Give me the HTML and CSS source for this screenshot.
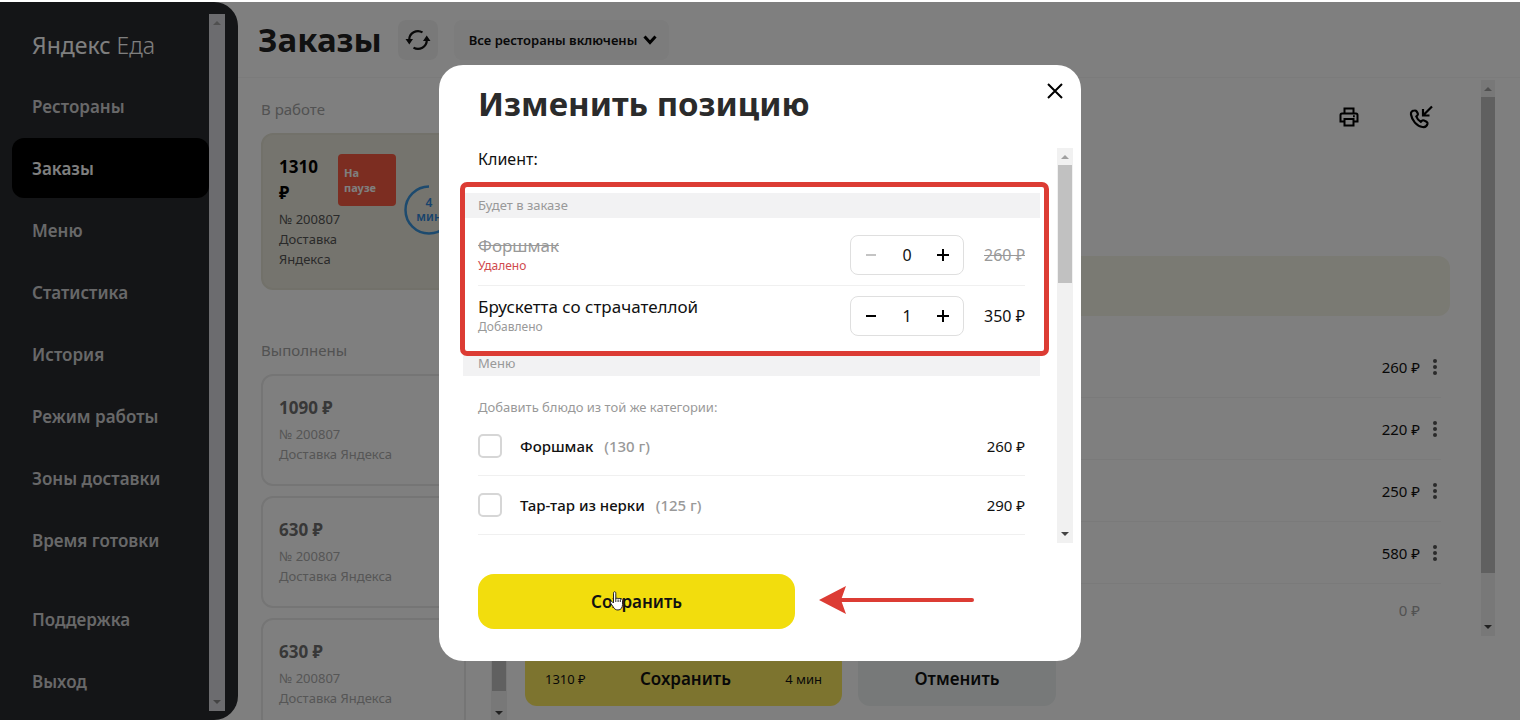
FILE: index.html
```html
<!DOCTYPE html>
<html lang="ru">

<head>
    <meta charset="UTF-8">
    <meta name="viewport" content="width=device-width, initial-scale=1.0">
    <title>Яндекс Еда — Заказы</title>
    <link rel="stylesheet" href="styles.css">
</head>

<body>
    <div class="app">
        <aside class="sidebar">
            <div class="sidebar-content">
                <div class="logo"><b>Яндекс</b> Еда</div>
                <nav class="menu">
                    <a href="#">Рестораны</a>
                    <a href="#" class="active">Заказы</a>
                    <a href="#">Меню</a>
                    <a href="#">Статистика</a>
                    <a href="#">История</a>
                    <a href="#">Режим работы</a>
                    <a href="#">Зоны доставки</a>
                    <a href="#">Время готовки</a>
                </nav>
                <nav class="menu menu-bottom">
                    <a href="#">Поддержка</a>
                    <a href="#">Выход</a>
                </nav>
            </div>
            <div class="scrollbar sidebar-scrollbar" aria-hidden="true">
                <i class="arrow-up"></i>
                <i class="arrow-down"></i>
            </div>
        </aside>

        <main class="main">
            <header class="header">
                <h1>Заказы</h1>
                <button class="refresh" type="button" aria-label="Обновить">
                    <svg width="26" height="24" viewBox="0 0 26 24" fill="none" stroke="#111" stroke-width="2.2">
                        <path d="M4.200 12A8.800 8.800 0 0 1 17.500 4.400M21.800 12A8.800 8.800 0 0 1 8.500 19.600" />
                        <path d="M.500 11h7.500l-3.700 5.500zM25.500 13H18l3.700-5.500z" fill="#111" stroke="none" />
                    </svg>
                </button>
                <div class="select-box">
                    <select aria-label="Рестораны">
                        <option>Все рестораны включены</option>
                    </select>
                    <svg width="14" height="10" viewBox="0 0 14 10" fill="none" stroke="#000" stroke-width="3">
                        <path d="M1.500 1.500L7 7.500l5.500-6" />
                    </svg>
                </div>
            </header>

            <div class="content">
                <section class="orders">
                    <h2>В работе</h2>
                    <article class="order order-current">
                        <div>
                            <div class="order-top">
                                <strong>1310 ₽</strong>
                                <span class="badge">На паузе</span>
                            </div>
                            <p class="order-info">№ 200807<br>Доставка Яндекса</p>
                        </div>
                        <div class="timer">
                            <svg width="50" height="50" viewBox="0 0 50 50" fill="none" stroke="#3a94dc" stroke-width="2.500">
                                <path d="M25 1.500a23.500 23.500 0 1 0 23.500 23.500" />
                            </svg>
                            <span>4<br>мин</span>
                        </div>
                    </article>
                    <h2 class="done-title">Выполнены</h2>
                    <article class="order">
                        <strong>1090 ₽</strong>
                        <p class="order-info">№ 200807<br>Доставка Яндекса</p>
                    </article>
                    <article class="order">
                        <strong>630 ₽</strong>
                        <p class="order-info">№ 200807<br>Доставка Яндекса</p>
                    </article>
                    <article class="order">
                        <strong>630 ₽</strong>
                        <p class="order-info">№ 200807<br>Доставка Яндекса</p>
                    </article>
                </section>
                <div class="scrollbar orders-scrollbar" aria-hidden="true">
                    <i class="arrow-up"></i>
                    <span class="thumb"></span>
                    <i class="arrow-down"></i>
                </div>

                <section class="details">
                    <div class="details-body">
                        <div class="details-content">
                            <div class="tools">
                                <button type="button" aria-label="Печать">
                                    <svg width="20" height="20" viewBox="0 0 20 20" fill="none" stroke="#000" stroke-width="2">
                                        <path d="M5.500 6V1.500h9V6M5 14.500H1.500V8q0-1.500 1.500-1.500h14q1.500 0 1.500 1.500v6.500H15M5.500 12h9v6.500h-9z" />
                                        <path d="M14 9.300h1.800" />
                                    </svg>
                                </button>
                                <button type="button" aria-label="Позвонить">
                                    <svg width="24" height="24" viewBox="0 0 24 24" fill="none" stroke="#000" stroke-width="2.200">
                                        <path d="M5.500 5.500C3.500 5.500 1.500 7 2 9.500c1 6 5.500 11.500 11.500 12.500 2.500.4 4.500-1 5-3.200.2-1-.2-1.500-1-2l-2.600-1.400c-1-.4-1.500-.2-2.300.6l-.8.8C9.500 15.500 8 13.500 7.300 11.500l1-1c.6-.6.8-1.200.5-2L7.600 6.400c-.4-.7-1-1-2.100-.9z" />
                                        <path d="M23 1.500L14.500 10M14 4v6.500h6.500" />
                                    </svg>
                                </button>
                            </div>
                            <div class="notice"></div>
                            <ul class="positions">
                                <li>260 ₽ <button type="button" aria-label="Действия"><i></i><i></i><i></i></button></li>
                                <li>220 ₽ <button type="button" aria-label="Действия"><i></i><i></i><i></i></button></li>
                                <li>250 ₽ <button type="button" aria-label="Действия"><i></i><i></i><i></i></button></li>
                                <li>580 ₽ <button type="button" aria-label="Действия"><i></i><i></i><i></i></button></li>
                                <li class="zero">0 ₽</li>
                            </ul>
                        </div>
                        <div class="scrollbar details-scrollbar" aria-hidden="true">
                            <i class="arrow-up"></i>
                            <span class="thumb"></span>
                            <i class="arrow-down"></i>
                        </div>
                    </div>
                    <footer class="details-footer">
                        <button class="accept" type="button"><span>1310 ₽</span><b>Сохранить</b><span>4 мин</span></button>
                        <button class="cancel" type="button">Отменить</button>
                    </footer>
                </section>
            </div>
        </main>
    </div>

    <div class="overlay">
        <div class="modal" role="dialog" aria-modal="true" aria-labelledby="modalTitle">
            <div class="modal-header">
                <h2 id="modalTitle">Изменить позицию</h2>
                <button type="button" aria-label="Закрыть">
                    <svg width="16" height="16" viewBox="0 0 16 16" stroke="#000" stroke-width="2">
                        <path d="M1 1l14 14M15 1L1 15" />
                    </svg>
                </button>
            </div>
            <div class="modal-body">
                <div class="modal-content">
                    <p class="client">Клиент:</p>
                    <section class="in-order">
                        <h3>Будет в заказе</h3>
                        <div class="item">
                            <div class="item-name">
                                <s>Форшмак</s>
                                <small class="removed">Удалено</small>
                            </div>
                            <div class="stepper">
                                <button type="button" aria-label="Меньше" disabled><svg width="12" height="12" viewBox="0 0 12 12"><path d="M1 6h10" /></svg></button>
                                <output>0</output>
                                <button type="button" aria-label="Больше"><svg width="12" height="12" viewBox="0 0 12 12"><path d="M0 6h12M6 0v12" /></svg></button>
                            </div>
                            <s class="price">260 ₽</s>
                        </div>
                        <div class="item">
                            <div class="item-name">
                                <span>Брускетта со страчателлой</span>
                                <small>Добавлено</small>
                            </div>
                            <div class="stepper">
                                <button type="button" aria-label="Меньше"><svg width="12" height="12" viewBox="0 0 12 12"><path d="M1 6h10" /></svg></button>
                                <output>1</output>
                                <button type="button" aria-label="Больше"><svg width="12" height="12" viewBox="0 0 12 12"><path d="M0 6h12M6 0v12" /></svg></button>
                            </div>
                            <span class="price">350 ₽</span>
                        </div>
                        <div class="highlight"></div>
                    </section>
                    <section>
                        <h3>Меню</h3>
                        <p class="hint">Добавить блюдо из той же категории:</p>
                        <label class="dish">
                            <input type="checkbox">
                            <span>Форшмак</span>
                            <span class="weight">(130 г)</span>
                            <span class="dish-price">260 ₽</span>
                        </label>
                        <label class="dish">
                            <input type="checkbox">
                            <span>Тар-тар из нерки</span>
                            <span class="weight">(125 г)</span>
                            <span class="dish-price">290 ₽</span>
                        </label>
                    </section>
                </div>
                <div class="scrollbar modal-scrollbar" aria-hidden="true">
                    <i class="arrow-up"></i>
                    <span class="thumb"></span>
                    <i class="arrow-down"></i>
                </div>
            </div>
            <div class="modal-footer">
                <button class="save" type="button">
                    Сохранить
                    <svg class="cursor" width="16" height="20" viewBox="0 0 16 20" fill="#fff" stroke="#222" stroke-width="1">
                        <path d="M4.500 12V2.200c0-2 2.300-2 2.300 0V8c.3-1.300 2-1.200 2.300 0 .4-1 2-.8 2.200.4.500-.9 2.200-.5 2.200.9v4.200c0 3-1.500 5.500-4.500 5.500-2.500 0-3.700-1.200-4.700-3L1.500 12c-.7-1.400.8-2.300 1.800-1.200z" />
                        <path d="M6.800 8v3M9.100 8.500V11M11.300 9v2" />
                    </svg>
                </button>
                <svg class="pointer" width="155" height="28" viewBox="0 0 155 28">
                    <path d="M0 14L27 0l-5 14 5 14z" fill="#dc3c34" />
                    <path d="M20 14h133" stroke="#dc3c34" stroke-width="4" stroke-linecap="round" />
                </svg>
            </div>
        </div>
    </div>
</body>

</html>
```
FILE: styles.css
```css
:root {
    --text-color: #111;
    --muted-color: #999;
    --line-color: #f0f0f0;
    --red-color: #dc3c34;
    --yellow-color: #f2dd0d;
}

* {
    box-sizing: border-box;
    margin: 0;
    padding: 0;
}

body {
    font-family: 'Noto Sans', 'Open Sans', sans-serif;
    font-size: 16px;
    color: var(--text-color);
    background: #fff;
    overflow: hidden;
}

button,
select {
    font: inherit;
    color: inherit;
    border: 0;
    background: none;
    cursor: pointer;
}

ul {
    list-style: none;
}

.app {
    display: flex;
    height: 100vh;
    padding-top: 2px;
}

/* scrollbars */
.scrollbar {
    display: flex;
    flex-direction: column;
    align-items: center;
    flex: none;
    width: 16px;
    padding: 7px 1px;
    background: #f1f1f1;
}

.arrow-up,
.arrow-down {
    border: 4px solid transparent;
    border-top-width: 0;
    border-bottom: 4px solid #a0a0a0;
}

.arrow-down {
    margin-top: auto;
    border-bottom-width: 0;
    border-top: 4px solid #444;
}

.thumb {
    width: 100%;
    margin-top: 6px;
    background: #c1c1c1;
}

/* sidebar */
.sidebar {
    display: flex;
    flex: none;
    width: 238px;
    padding: 12px 13px 9px 12px;
    background: #282a2e;
    border-radius: 0 24px 24px 0;
}

.sidebar-content {
    flex: 1;
    overflow: hidden;
}

.sidebar-scrollbar {
    background: #d8d8de;
}

.sidebar-scrollbar .arrow-down {
    border-top-color: #888;
}

.logo {
    height: 62px;
    padding-left: 20px;
    font-size: 23px;
    font-weight: 300;
    line-height: 62px;
    color: #fff;
}

.logo b {
    font-weight: 400;
}

.menu {
    display: flex;
    flex-direction: column;
    gap: 2px;
}

.menu-bottom {
    margin-top: 19px;
}

.menu a {
    padding: 1px 20px 0;
    font-size: 17px;
    font-weight: 600;
    line-height: 59px;
    color: #d0d0d2;
    text-decoration: none;
    border-radius: 12px;
}

.menu .active {
    color: #fff;
    background: #000;
}

/* header */
.main {
    display: flex;
    flex: 1;
    flex-direction: column;
    min-width: 0;
}

.header {
    display: flex;
    flex: none;
    align-items: center;
    gap: 16px;
    height: 76px;
    padding-left: 20px;
    border-bottom: 1px solid #f6f6f6;
}

.header h1 {
    font-size: 33px;
    line-height: 40px;
    color: #222;
}

.refresh {
    display: flex;
    align-items: center;
    justify-content: center;
    width: 40px;
    height: 40px;
    background: #f3f3f3;
    border-radius: 8px;
}

.select-box {
    display: flex;
    align-items: center;
    gap: 5px;
    height: 40px;
    padding: 0 12px 0 15px;
    background: #f8f8f8;
    border-radius: 8px;
}

.select-box select {
    font-size: 13px;
    font-weight: 600;
    appearance: none;
}

/* orders */
.content {
    display: flex;
    flex: 1;
    min-height: 0;
    padding: 0 25px 0 23px;
}

.orders {
    width: 205px;
    padding-top: 20px;
    overflow: hidden;
}

.orders h2 {
    margin-bottom: 13px;
    font-size: 15px;
    font-weight: 400;
    line-height: 22px;
    color: #a4a4a4;
}

.orders .done-title {
    margin-top: 49px;
}

.order {
    height: 112px;
    margin-bottom: 10px;
    padding: 19px 16px;
    color: #707070;
    border: 2px solid #eaeaea;
    border-radius: 12px;
}

.order strong {
    display: block;
    font-size: 17px;
    line-height: 26px;
}

.order-info {
    margin-top: 3px;
    font-size: 13px;
    line-height: 20px;
    color: #acacac;
}

.order-current {
    display: flex;
    gap: 8px;
    height: 157px;
    color: #000;
    background: #ebe9dc;
    border-color: #e4e2d4;
}

.order-top {
    display: flex;
    width: 117px;
    justify-content: space-between;
}

.order-top strong {
    width: 50px;
}

.badge {
    width: 58px;
    padding: 11px 6px;
    font-size: 11px;
    font-weight: 700;
    line-height: 15px;
    color: #fff;
    background: #f85a42;
    border-radius: 4px;
}

.order-current .order-info {
    width: 80px;
    color: #555;
}

.timer {
    display: grid;
    flex: none;
    place-items: center;
    align-self: center;
    margin-bottom: 4px;
    font-size: 12px;
    font-weight: 600;
    line-height: 14px;
    text-align: center;
    color: #2f86d8;
}

.timer svg,
.timer span {
    grid-area: 1 / 1;
}

.orders-scrollbar {
    margin: 0 18px 0 25px;
    padding-bottom: 5px;
}

.orders-scrollbar .thumb {
    height: 596px;
}

/* order details */
.details {
    display: flex;
    flex: 1;
    flex-direction: column;
    min-width: 0;
    padding-top: 2px;
}

.details-body {
    display: flex;
    flex: none;
    gap: 31px;
}

.details-content {
    flex: 1;
}

.tools {
    display: flex;
    justify-content: flex-end;
    gap: 16px;
    padding: 9px 1px 0 0;
}

.tools button {
    display: flex;
    align-items: center;
    justify-content: center;
    width: 56px;
    height: 56px;
}

.notice {
    height: 60px;
    margin: 111px 0 20px;
    background: #f5f4e7;
    border-radius: 12px;
}

.positions li {
    display: flex;
    align-items: center;
    justify-content: flex-end;
    height: 62px;
    margin-right: 9px;
    font-size: 15px;
    border-bottom: 1px solid #f4f4f4;
}

.positions button {
    display: flex;
    flex-direction: column;
    gap: 2px;
    margin-left: 9px;
    padding: 4px;
}

.positions button i {
    width: 4px;
    height: 4px;
    background: #555;
    border-radius: 50%;
}

.positions .zero {
    height: 52px;
    padding-right: 21px;
    color: #a4a4a4;
    border-bottom: 0;
}

.details-scrollbar {
    width: 14px;
    padding: 7px 0;
}

.details-scrollbar .thumb {
    height: 476px;
}

.details-footer {
    display: flex;
    gap: 16px;
    margin-top: 15px;
}

.accept,
.cancel {
    display: flex;
    align-items: center;
    justify-content: space-between;
    width: 317px;
    height: 55px;
    padding: 0 20px;
    font-size: 13px;
    background: #fbe85e;
    border-radius: 12px;
}

.accept b,
.cancel {
    font-size: 17px;
    font-weight: 600;
}

.cancel {
    justify-content: center;
    width: 198px;
    background: #eef3f2;
}

/* modal */
.overlay {
    position: fixed;
    inset: 2px 0 0;
    display: flex;
    align-items: center;
    justify-content: center;
    padding-top: 4px;
    background: rgba(0, 0, 0, 0.5);
}

.modal {
    width: 642px;
    max-width: 100%;
    padding: 18px 8px 32px 24px;
    background: #fff;
    border-radius: 24px;
}

.modal-header {
    display: flex;
    align-items: flex-start;
    justify-content: space-between;
    padding: 0 10px 23px 15px;
}

.modal-header h2 {
    font-size: 33px;
    line-height: 42px;
    color: #2b2b2b;
}

.modal-header button {
    display: flex;
}

.modal-body {
    display: flex;
    gap: 17px;
}

.modal-content {
    flex: 1;
    padding-bottom: 8px;
}

.client {
    height: 45px;
    padding-left: 15px;
    line-height: 22px;
}

.in-order {
    position: relative;
    padding-bottom: 5px;
}

.modal h3 {
    padding-left: 15px;
    font-size: 13px;
    font-weight: 400;
    line-height: 25px;
    color: var(--muted-color);
    background: #f2f2f3;
}

.in-order h3 {
    margin-bottom: 7px;
}

.item {
    display: flex;
    align-items: center;
    margin: 0 15px;
    padding: 10px 0;
    border-bottom: 1px solid var(--line-color);
}

.item:nth-of-type(2) {
    border-bottom: 0;
}

.item-name {
    display: flex;
    flex: 1;
    flex-direction: column;
    font-size: 17px;
    line-height: 22px;
}

.item-name small {
    font-size: 12px;
    line-height: 18px;
    color: var(--muted-color);
}

.item-name .removed {
    color: #d04a4e;
}

.item s {
    color: var(--muted-color);
}

.stepper {
    display: flex;
    align-items: center;
    justify-content: space-between;
    width: 114px;
    height: 40px;
    padding: 0 14px;
    border: 1px solid #dfdfdf;
    border-radius: 8px;
}

.stepper button {
    display: flex;
}

.stepper path {
    stroke: #000;
    stroke-width: 2;
}

.stepper button:disabled path {
    stroke: #c4c4c4;
}

.price {
    width: 61px;
    text-align: right;
}

.highlight {
    position: absolute;
    inset: -11px -9px -5px -3px;
    border: 5px solid var(--red-color);
    border-radius: 7px;
    pointer-events: none;
}

.hint {
    padding: 21px 15px 0;
    font-size: 13px;
    line-height: 20px;
    color: var(--muted-color);
}

.dish {
    display: flex;
    align-items: center;
    height: 59px;
    margin: 0 15px;
    font-size: 15px;
    font-weight: 500;
    border-bottom: 1px solid var(--line-color);
}

.dish input {
    width: 24px;
    height: 24px;
    margin-right: 18px;
    border: 2px solid #d6d6d6;
    border-radius: 5px;
    appearance: none;
}

.dish .weight {
    margin-left: 11px;
    color: var(--muted-color);
}

.dish-price {
    margin-left: auto;
    font-weight: 400;
}

.modal-scrollbar .thumb {
    height: 118px;
}

.modal-footer {
    display: flex;
    align-items: center;
    gap: 24px;
    padding: 31px 15px 0;
}

.save {
    position: relative;
    width: 317px;
    height: 55px;
    font-size: 17px;
    font-weight: 600;
    background: var(--yellow-color);
    border-radius: 16px;
}

.cursor {
    position: absolute;
    top: 17px;
    left: 131px;
}

.pointer {
    margin-bottom: 4px;
}
```
